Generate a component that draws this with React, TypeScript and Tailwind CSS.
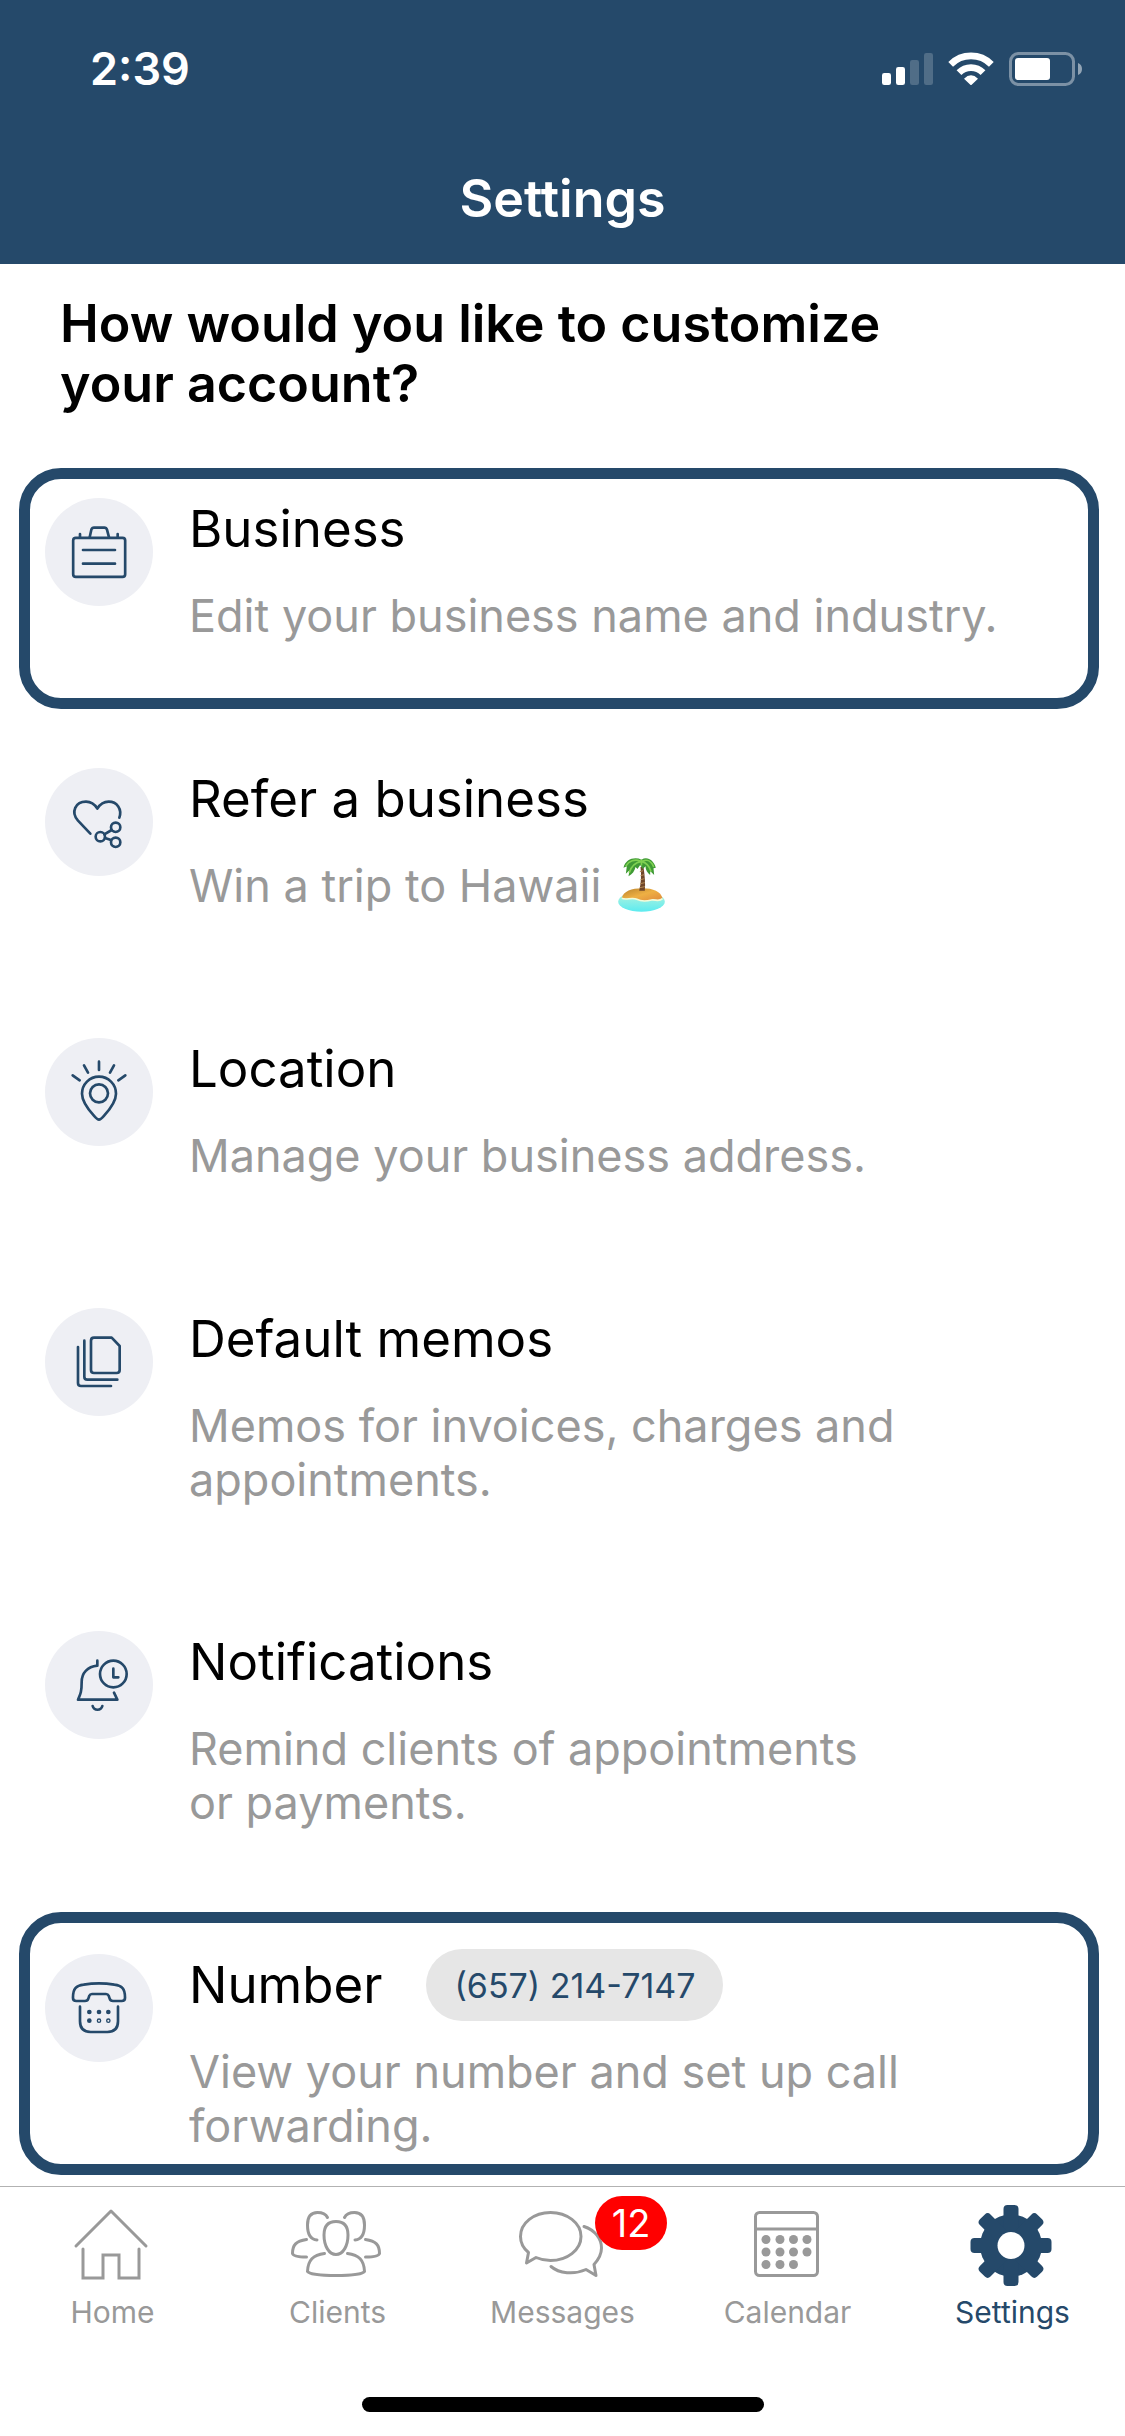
import React from 'react';

type IconProps = { children: React.ReactNode };

const RowIcon: React.FC<IconProps> = ({ children }) => (
  <svg
    viewBox="0 0 324 324"
    className="w-[108px] h-[108px] shrink-0 rounded-full bg-[#eeeff4] text-[#25496a]"
    fill="none"
    stroke="currentColor"
    strokeWidth="8"
    strokeLinecap="round"
    strokeLinejoin="round"
    aria-hidden="true"
  >
    {children}
  </svg>
);

const TabIcon: React.FC<IconProps> = ({ children }) => (
  <svg
    viewBox="0 0 90 90"
    className="w-[90px] h-[90px]"
    fill="none"
    stroke="currentColor"
    strokeWidth="3"
    strokeLinecap="round"
    strokeLinejoin="round"
    aria-hidden="true"
  >
    {children}
  </svg>
);

const BusinessIcon = () => (
  <RowIcon>
    <rect x="84.5" y="119.5" width="156" height="117" rx="8" />
    <path d="M114 156H210M114 197H210M105 108V118M218 108V118" />
    <path d="M134 118L139 95Q141 89 147 89H178Q184 89 186 95L192 118" />
  </RowIcon>
);

const ReferIcon = () => (
  <RowIcon>
    <path d="M136 197L99 158C76 132 92 101 123 101C138 101 149 109 157 122C165 109 176 101 191 101C216 101 232 123 223 149" />
    <circle cx="166" cy="206" r="14" />
    <circle cx="212" cy="178" r="14" />
    <circle cx="212" cy="223" r="14" />
    <path d="M178 199L200 186M180 210L198 216" />
  </RowIcon>
);

const LocationIcon = () => (
  <RowIcon>
    <path d="M162 245Q157 245 146 232C128 212 111 191 111 167A51 51 0 0 1 213 167C213 191 196 212 178 232Q167 245 162 245Z" />
    <circle cx="162" cy="166" r="27" />
    <path d="M162 71V96M117 82L129 104M207 82L195 104M83 112L104 127M241 112L220 127" />
  </RowIcon>
);

const MemosIcon = () => (
  <RowIcon>
    <path d="M147 89H200L224 114V186Q224 195 215 195H147Q138 195 138 186V98Q138 89 147 89Z" />
    <path d="M118 98V206Q118 215 127 215H217" />
    <path d="M99 117V225Q99 234 108 234H198" />
  </RowIcon>
);

const NotificationsIcon = () => (
  <RowIcon>
    <path d="M157 89V104C127 107 110 126 110 153C110 184 106 190 99 206H217L207 185" />
    <path d="M143 225A15 15 0 0 0 172 225" />
    <circle cx="205" cy="129" r="40" />
    <path d="M205 113V139H220" />
  </RowIcon>
);

const NumberIcon = () => (
  <RowIcon>
    <path d="M84 130C84 104 93 95 116 92Q162 84 208 92C231 95 240 104 240 130V132Q240 141 230 141H204Q196 141 194 134L191 125Q189 120 183 120H141Q135 120 133 125L130 134Q128 141 120 141H94Q84 141 84 132Z" />
    <path d="M105 158V202Q105 234 137 234H187Q219 234 219 202V158" />
    <g stroke="none" fill="currentColor">
      <circle cx="133" cy="174" r="7" />
      <circle cx="162" cy="174" r="7" />
      <circle cx="190" cy="174" r="7" />
      <circle cx="133" cy="200" r="7" />
    </g>
    <circle cx="162" cy="200" r="5" strokeWidth="4" />
    <circle cx="190" cy="200" r="5" strokeWidth="4" />
  </RowIcon>
);

const HomeIcon = () => (
  <TabIcon>
    <path d="M10 46L45 11L80 46" />
    <path d="M17 49V78H37V55H53V78H73V49" strokeLinejoin="miter" />
  </TabIcon>
);

const ClientSide = () => (
  <>
    <path d="M36.500 17.500C34.500 13.500 31 12.500 26.500 12.500C19 12.500 16.500 18 16.500 25C16.500 35 20 39.500 26 40" />
    <path d="M15.500 39.500C5 41 1.500 45 1.500 53.500C2 56 8 57 15.500 57" />
  </>
);

const ClientsIcon = () => (
  <TabIcon>
    <path d="M45 21.500C37 21.500 33 26 33 35C33 46 38 54.500 45 54.500S57 46 57 35C57 26 53 21.500 45 21.500Z" />
    <path d="M33.500 53.500C22 55 17 60 16.500 71.500C18 74 30 75.500 45 75.500S72 74 73.500 71.500C73 60 68 55 56.500 53.500" />
    <ClientSide />
    <g transform="translate(90 0) scale(-1 1)">
      <ClientSide />
    </g>
  </TabIcon>
);

const MessagesIcon = () => (
  <TabIcon>
    <path d="M12.500 52.500C7 48 4.500 42 4.500 36.500C4.500 23 18 12.500 34.500 12.500S65 23 65 36.500S51 60.500 34.500 60.500C29 60.500 24.500 59.500 20 57.500L10.500 63Z" />
    <path d="M68 26.500C79 30 85.500 39 85.500 48C85.500 54 83 59 78 64.500L80 75.500L70 69.500C58 75 43 73.500 35 66.500" />
  </TabIcon>
);

const CalendarIcon = () => (
  <TabIcon>
    <rect x="14.500" y="12.500" width="62" height="63" rx="4" />
    <path d="M15 29H76" strokeLinecap="butt" />
    <g stroke="none" fill="currentColor">
      {[25, 39, 52.5, 66].map(x => (
        <circle key={x} cx={x} cy="39.500" r="4.500" />
      ))}
      {[25, 39, 52.5, 66].map(x => (
        <circle key={x} cx={x} cy="52" r="4.500" />
      ))}
      {[25, 39, 52.5].map(x => (
        <circle key={x} cx={x} cy="64.500" r="4.500" />
      ))}
    </g>
  </TabIcon>
);

const SettingsIcon = () => (
  <TabIcon>
    <g stroke="none" fill="currentColor">
      <circle cx="45" cy="45.500" r="31" />
      {[0, 45, 90, 135].map(angle => (
        <rect
          key={angle}
          x="37.500"
          y="5"
          width="15"
          height="81"
          rx="4"
          transform={`rotate(${angle} 45 45.5)`}
        />
      ))}
      <circle cx="45" cy="45.500" r="13.500" fill="#fff" />
    </g>
  </TabIcon>
);

const IslandIcon = () => (
  <svg
    viewBox="0 0 140 165"
    className="inline-block mx-[4px] -my-[8px] w-[47px] h-[55px] align-[-2px]"
    role="img"
    aria-label="Desert island"
  >
    <defs>
      <linearGradient id="sea" x1="0" y1="0" x2="0" y2="1">
        <stop offset="0" stopColor="#b9f3dd" />
        <stop offset="1" stopColor="#5cebf0" />
      </linearGradient>
      <linearGradient id="sand" x1="0" y1="0" x2="1" y2="1">
        <stop offset="0" stopColor="#b9822c" />
        <stop offset="0.5" stopColor="#eeb044" />
        <stop offset="1" stopColor="#e08a3c" />
      </linearGradient>
    </defs>
    <ellipse cx="70" cy="134" rx="70" ry="30" fill="url(#sea)" />
    <path
      d="M11 123C16 103 40 94 72 94C106 94 128 104 133 124C122 134 112 126 100 128C84 132 72 134 56 126C40 118 26 130 11 123Z"
      fill="url(#sand)"
    />
    <path
      d="M11 124C26 131 40 119 56 127C72 135 84 133 100 129C112 127 122 135 133 125"
      fill="none"
      stroke="#f3fbd9"
      strokeWidth="5"
    />
    <path d="M67 30H76C80 58 82 80 80 101H63C69 78 70 56 67 30Z" fill="#70472a" />
    <path
      d="M65 44L75 41M67 56L78 53M67 68L79 65M66 80L80 77M65 92L80 89"
      stroke="#b58a55"
      strokeWidth="3"
    />
    <path
      d="M70 8C50 -2 22 6 16 32L26 28L23 50L34 40L31 58C42 52 50 42 52 30L58 36L66 24L74 36L82 28C82 40 88 48 96 54L96 42L108 54L106 34L113 32C106 10 88 -3 70 8Z"
      fill="#3f9a35"
    />
    <path
      d="M66 12C50 6 32 12 24 26M68 14C54 16 40 28 34 46M74 12C88 6 100 14 106 28M72 14C86 18 94 30 98 42M70 10V24"
      fill="none"
      stroke="#7fd052"
      strokeWidth="5"
      strokeLinecap="round"
    />
  </svg>
);

const rows = [
  {
    id: 1,
    title: 'Business',
    text: 'Edit your business name and industry.',
    Icon: BusinessIcon,
    box: 'border-[#25496a] pt-[19px] pb-[55px]',
  },
  {
    id: 2,
    title: 'Refer a business',
    text: 'Win a trip to Hawaii ',
    Icon: ReferIcon,
    island: true,
    box: 'border-transparent pt-[19px] pb-[55px]',
  },
  {
    id: 3,
    title: 'Location',
    text: 'Manage your business address.',
    Icon: LocationIcon,
    box: 'border-transparent pt-[19px] pb-[55px]',
  },
  {
    id: 4,
    title: 'Default memos',
    text: 'Memos for invoices, charges and\nappointments.',
    Icon: MemosIcon,
    box: 'border-transparent pt-[19px] pb-[54px]',
  },
  {
    id: 5,
    title: 'Notifications',
    text: 'Remind clients of appointments\nor payments.',
    Icon: NotificationsIcon,
    box: 'border-transparent pt-[19px] pb-[42px]',
  },
  {
    id: 6,
    title: 'Number',
    text: 'View your number and set up call\nforwarding.',
    Icon: NumberIcon,
    phone: '(657) 214-7147',
    box: 'border-[#25496a] pt-[31px] pb-[11px]',
  },
];

const tabs = [
  { id: 1, text: 'Home', Icon: HomeIcon },
  { id: 2, text: 'Clients', Icon: ClientsIcon },
  { id: 3, text: 'Messages', Icon: MessagesIcon, count: 12 },
  { id: 4, text: 'Calendar', Icon: CalendarIcon },
  { id: 5, text: 'Settings', Icon: SettingsIcon, active: true },
];

const StatusBar = () => (
  <div className="flex items-center justify-between h-[40px] pl-[90px] pr-[43px]">
    <div className="text-[45px] leading-[40px] font-semibold">2:39</div>
    <div className="flex items-center gap-[15px]">
      <svg viewBox="0 0 153 102" className="w-[51px] h-[34px]" fill="#fff">
        <rect x="0" y="63" width="27" height="36" rx="7" />
        <rect x="42" y="45" width="27" height="54" rx="7" />
        <rect x="84" y="24" width="27" height="75" rx="7" opacity="0.2" />
        <rect x="126" y="3" width="27" height="96" rx="7" opacity="0.2" />
      </svg>
      <svg viewBox="0 0 138 102" className="w-[46px] h-[34px]" fill="none">
        <path d="M8 37A86 86 0 0 1 130 37" stroke="#fff" strokeWidth="20" />
        <path d="M33 62A50 50 0 0 1 105 62" stroke="#fff" strokeWidth="20" />
        <path d="M48 80Q69 60 90 80L71 98Q69 100 67 98Z" fill="#fff" />
      </svg>
      <svg viewBox="0 0 219 102" className="w-[73px] h-[34px]" fill="#fff">
        <rect
          x="4.5"
          y="4.5"
          width="189"
          height="93"
          rx="24"
          fill="none"
          stroke="#fff"
          strokeWidth="9"
          opacity="0.4"
        />
        <rect x="18" y="18" width="105" height="66" rx="9" />
        <path d="M207 33Q219 38 219 51T207 69Z" opacity="0.5" />
      </svg>
    </div>
  </div>
);

const App: React.FC = () => (
  <div className="min-h-screen flex flex-col bg-white text-black font-['Inter',sans-serif]">
    <header className="bg-[#25496a] text-white pt-[49px] pb-[35px]">
      <StatusBar />
      <h1 className="mt-[80px] text-[52px] leading-[60px] font-semibold text-center">
        Settings
      </h1>
    </header>
    <main className="grow pt-[30px]">
      <h2 className="ml-[60px] max-w-[900px] text-[52px] leading-[60px] font-semibold">
        How would you like to customize your account?
      </h2>
      <div className="pt-[54px] pl-[19px] pr-[26px]">
        {rows.map(({ id, title, text, Icon, island, phone, box }) => (
          <a
            key={id}
            href={`#row-${id}`}
            className={`flex items-start gap-[36px] pl-[15px] border-[11px] rounded-[42px] not-last:mb-[29px] ${box}`}
          >
            <Icon />
            <div className="pt-px">
              <div className="flex items-center gap-[44px] h-[60px]">
                <span className="text-[51px] leading-[60px]">{title}</span>
                {phone && (
                  <span className="flex items-center h-[72px] px-[28px] rounded-full bg-[#e6e6e6] text-[#25496a] text-[34px]">
                    {phone}
                  </span>
                )}
              </div>
              <div className="mt-[30px] text-[45px] leading-[54px] text-[#999] whitespace-pre-line">
                {text}
                {island && <IslandIcon />}
              </div>
            </div>
          </a>
        ))}
      </div>
    </main>
    <nav className="mt-[11px] border-t border-[#b2b2b2] pt-[13px] grid grid-cols-5">
      {tabs.map(({ id, text, Icon, count, active }) => (
        <button
          key={id}
          className={`flex flex-col items-center ${active ? 'text-[#25496a]' : 'text-[#999]'}`}
        >
          <span className="relative mr-[3px]">
            <Icon />
            {count && (
              <span className="absolute -top-[4px] left-[79px] flex items-center justify-center w-[72px] h-[54px] rounded-full bg-[#ff0000] text-white text-[38px]">
                {count}
              </span>
            )}
          </span>
          <span className="mt-[4px] text-[30px] leading-[36px]">{text}</span>
        </button>
      ))}
    </nav>
    <div className="mt-[67px] mb-[24px] mx-auto w-[402px] h-[15px] rounded-full bg-black"></div>
  </div>
);

export default App;
